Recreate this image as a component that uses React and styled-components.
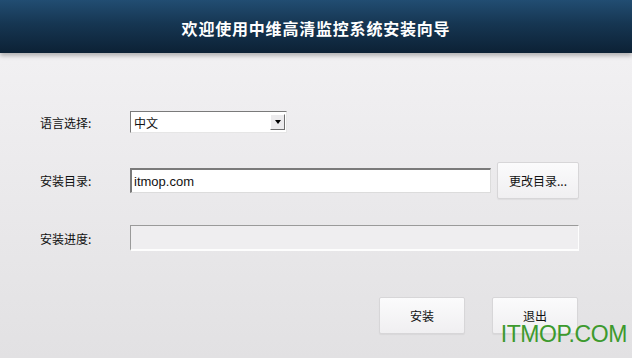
import styled, { createGlobalStyle } from 'styled-components';

const GlobalStyle = createGlobalStyle`
    html, body {
        margin: 0;
        padding: 0;
    }
    body {
        font-family: "Noto Sans CJK SC", "Liberation Sans", sans-serif;
        font-size: 12px;
        color: #111;
    }
`;

const Window = styled.div`
    width: 632px;
    height: 358px;
    display: flex;
    flex-direction: column;
    overflow: hidden;
    position: relative;
    background: linear-gradient(#f4f3f5, #e2e1e3);
`;

const Header = styled.div`
    height: 53px;
    flex: none;
    display: flex;
    align-items: center;
    justify-content: center;
    background: linear-gradient(#224d72, #163652 45%, #0c2135);
    color: #fff;
    font-size: 16px;
    font-weight: bold;
    letter-spacing: 0.8px;
    box-shadow: 0 3px 4px rgba(0, 0, 0, 0.25);
    padding-top: 2px;
    box-sizing: border-box;
`;

const Form = styled.div`
    display: flex;
    flex-direction: column;
    padding: 58px 53px 0 40px;
`;

const Row = styled.div`
    display: flex;
    align-items: center;
    height: ${({ $h }) => $h}px;
    margin-top: ${({ $mt }) => $mt || 0}px;
`;

const Label = styled.div`
    width: 90px;
    flex: none;
    font-size: 12px;
`;

const Select = styled.div`
    width: 157px;
    height: 22px;
    box-sizing: border-box;
    display: flex;
    align-items: center;
    justify-content: space-between;
    background: #fff;
    border: 1px solid;
    border-color: #7a7a7a #e6e6e6 #e6e6e6 #7a7a7a;
    padding: 0 1px 0 3px;
    font-size: 12px;
`;

const Arrow = styled.div`
    width: 15px;
    height: 16px;
    box-sizing: border-box;
    background: #ecebed;
    border: 1px solid;
    border-color: #fff #6e6e6e #6e6e6e #fff;
    display: flex;
    align-items: center;
    justify-content: center;
    &::after {
        content: '';
        border-left: 3px solid transparent;
        border-right: 3px solid transparent;
        border-top: 4px solid #000;
    }
`;

const Input = styled.div`
    width: 361px;
    height: 25px;
    box-sizing: border-box;
    background: #fff;
    border: 1px solid;
    border-color: #7a7a7a #dcdcdc #dcdcdc #7a7a7a;
    border-width: 2px 1px 1px 2px;
    padding: 0 2px;
    display: flex;
    align-items: center;
    font-family: "Liberation Sans", sans-serif;
    font-size: 13px;
`;

const Button = styled.div`
    width: ${({ $w }) => $w}px;
    height: ${({ $h }) => $h}px;
    box-sizing: border-box;
    flex: none;
    display: flex;
    align-items: center;
    justify-content: center;
    border: 1px solid #d7d6d8;
    border-radius: 2px;
    background: linear-gradient(#fbfbfc, #f0eff1);
    box-shadow: 0 1px 1px rgba(0, 0, 0, 0.05);
    font-size: 12px;
    margin-left: ${({ $ml }) => $ml || 0}px;
`;

const Progress = styled.div`
    width: 449px;
    height: 26px;
    box-sizing: border-box;
    background: #efeef0;
    border: 1px solid;
    border-color: #9a9a9a #fdfdfd #fdfdfd #9a9a9a;
    border-width: 1px 1px 2px 1px;
`;

const Actions = styled.div`
    display: flex;
    justify-content: flex-end;
    gap: 27px;
    padding: 46px 54px 0 0;
`;

const Watermark = styled.div`
    position: absolute;
    right: 5px;
    bottom: 12px;
    font-family: "Liberation Sans", sans-serif;
    font-size: 23px;
    letter-spacing: -0.4px;
    color: #3d9a2e;
    line-height: 1;
`;

export default function App() {
    return (
        <>
            <GlobalStyle />
            <Window>
                <Header>欢迎使用中维高清监控系统安装向导</Header>
                <Form>
                    <Row $h={22}>
                        <Label>语言选择:</Label>
                        <Select>
                            <span>中文</span>
                            <Arrow />
                        </Select>
                    </Row>
                    <Row $h={37} $mt={29}>
                        <Label>安装目录:</Label>
                        <Input>itmop.com</Input>
                        <Button $w={82} $h={37} $ml={6}>
                            更改目录...
                        </Button>
                    </Row>
                    <Row $h={26} $mt={26}>
                        <Label>安装进度:</Label>
                        <Progress />
                    </Row>
                </Form>
                <Actions>
                    <Button $w={86} $h={37}>安装</Button>
                    <Button $w={86} $h={37}>退出</Button>
                </Actions>
                <Watermark>ITMOP.COM</Watermark>
            </Window>
        </>
    );
}
